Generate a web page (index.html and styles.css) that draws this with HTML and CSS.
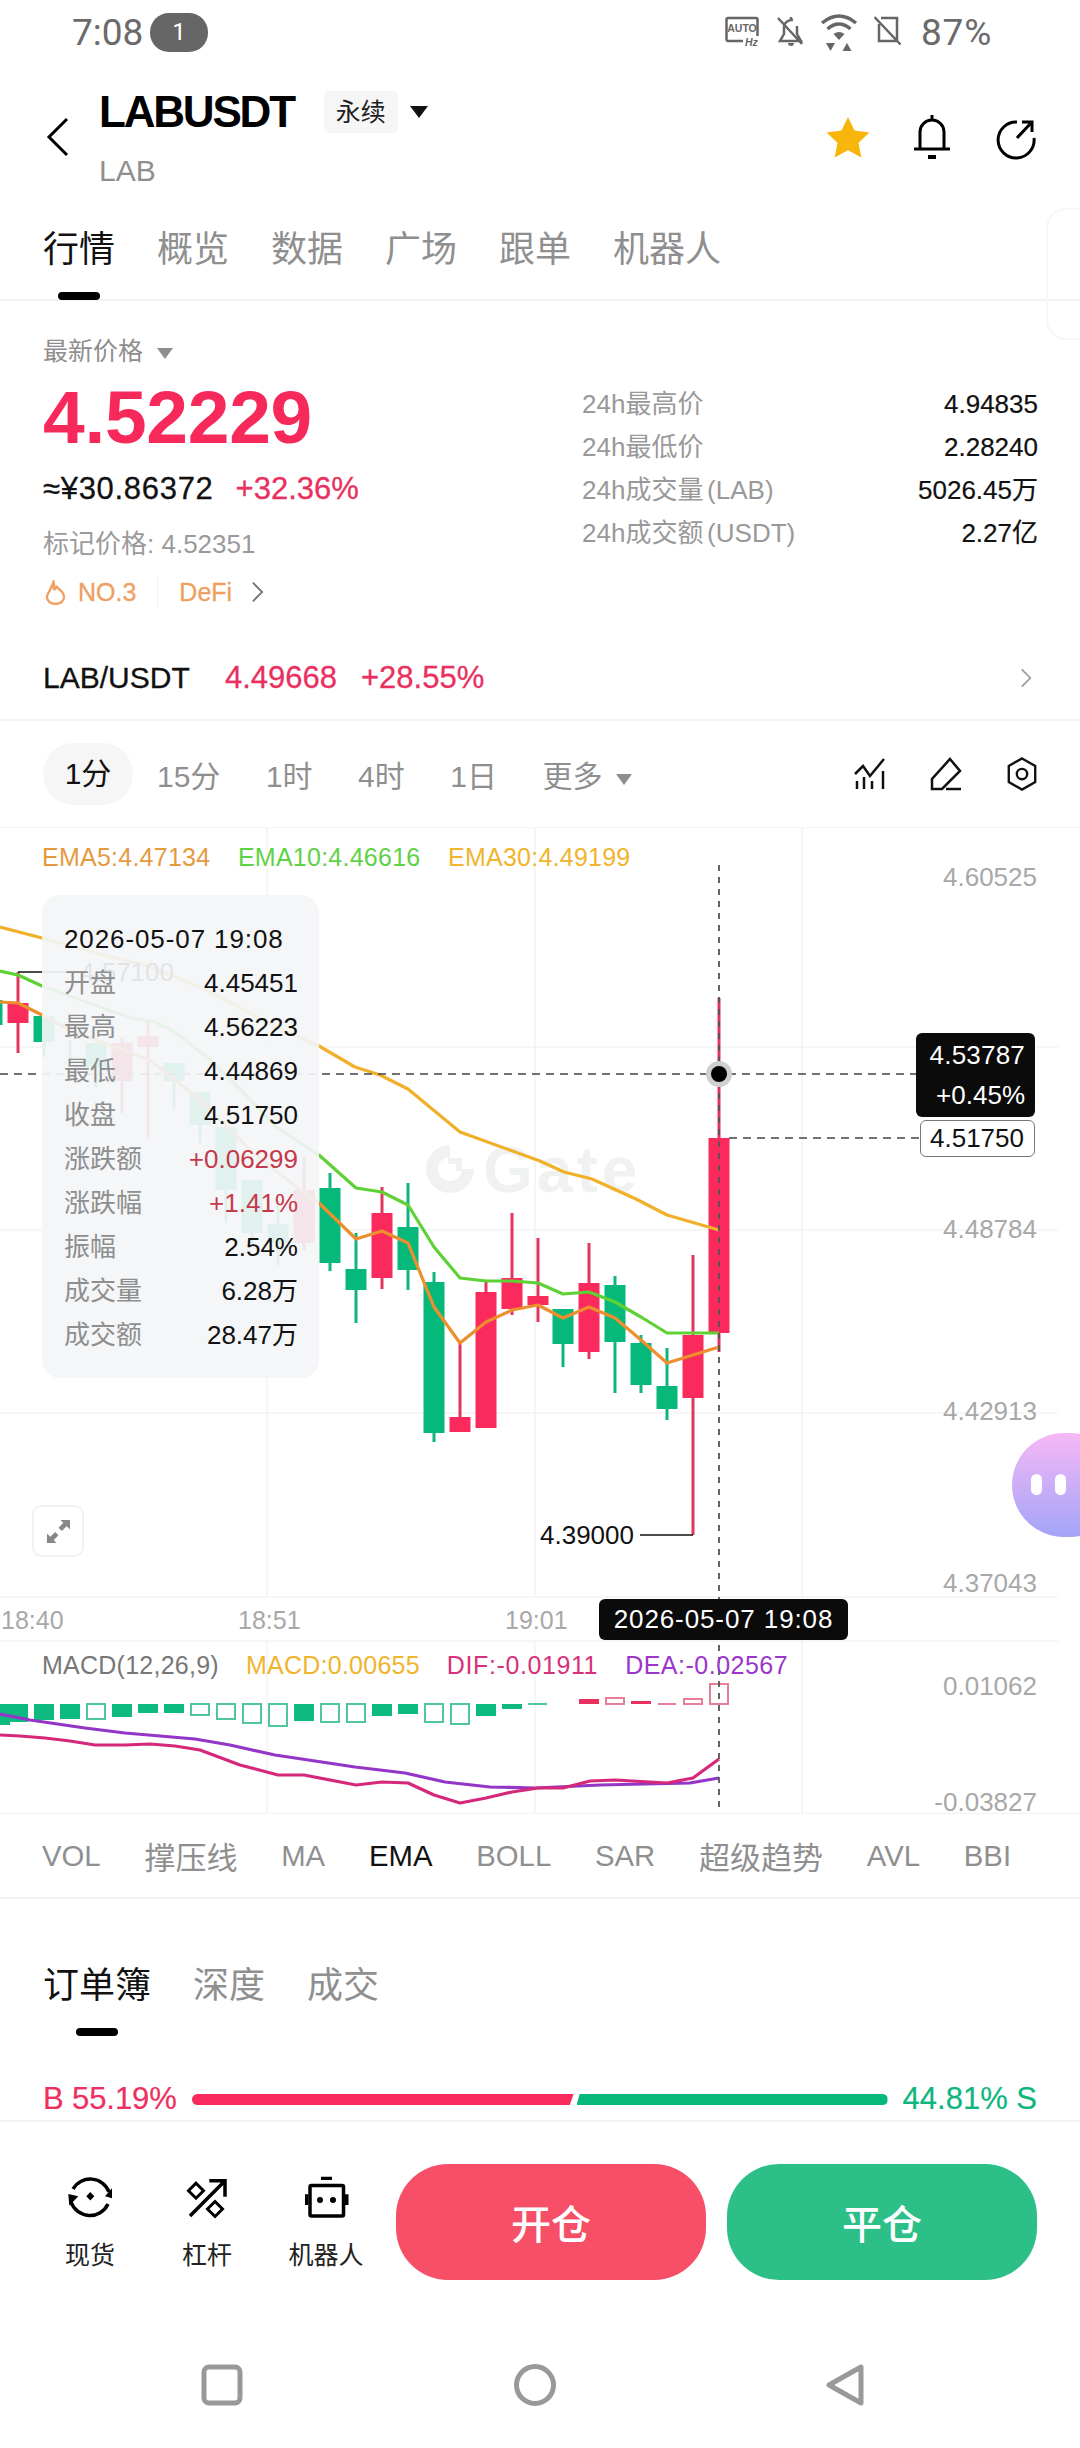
FILE: index.html
```html
<!DOCTYPE html>
<html lang="zh">
<head>
<meta charset="utf-8">
<title>LABUSDT</title>
<link rel="stylesheet" href="styles.css">
</head>
<body>
<div class="app">
  <div class="statusbar">
    <div class="clock">7:08</div>
    <div class="notif">1</div>
    <div class="status-icons">
      <svg class="si si-auto" viewBox="0 0 36 32"><path d="M18 25H3a1.500 1.500 0 0 1-1.500-1.500V3.500A1.500 1.500 0 0 1 3 2h28a1.500 1.500 0 0 1 1.500 1.500V20" class="si-line"/><text x="17" y="16" class="si-auto-t">AUTO</text><text x="20" y="30" class="si-hz">Hz</text></svg>
      <svg class="si si-bell" viewBox="0 0 28 32"><path d="M7 10a8 8 0 0 1 9-6M20 10v8l4 7H9M7 10v8l-4 7h7M14 1v3M1 2l24 26" class="si-line"/><path d="M11 27h6a3 3 0 0 1-6 0z" class="si-fill"/></svg>
      <svg class="si si-wifi" viewBox="0 0 38 38"><path d="M2 10Q19-4 36 10M7.500 16Q19 6 30.500 16" class="si-wave"/><path d="M13.500 21Q19 17 24.500 21L19 27z" class="si-fill"/><path d="M6 30h9l-4.500 8zM22.500 38h9L27 30z" class="si-fill"/></svg>
      <svg class="si si-sim" viewBox="0 0 28 32"><path d="M7 2h16v23H5V8M0.500 1L26.500 28.500" class="si-line"/></svg>
    </div>
    <div class="battery">87%</div>
  </div>

  <header class="titlebar">
    <svg class="back" viewBox="0 0 24 40"><path d="M21 2L3 20l18 18" class="icon-black-3"/></svg>
    <div class="title-text">
      <div class="title-main"><span class="symbol">LABUSDT</span><span class="perp">永续</span><span class="caret caret-black"></span></div>
      <div class="title-sub">LAB</div>
    </div>
    <svg class="star" viewBox="0 0 48 44"><path d="M24 2l6.500 13.500 15 2-11 10.300 2.800 14.700L24 35.300 10.700 42.500l2.800-14.700-11-10.300 15-2z"/></svg>
    <svg class="bell" viewBox="0 0 40 46"><path d="M8 34V18a12 12 0 0 1 24 0v16M2 35h36M20 1v4" class="icon-black-3"/><path d="M16 41h8v4h-8z" class="fill-black"/></svg>
    <svg class="share" viewBox="0 0 42 42"><path d="M22 4A18 18 0 1 0 39 20" class="icon-black-3"/><path d="M22 20L36 5M27 4h10v10" class="icon-black-3"/></svg>
  </header>

  <nav class="tabs">
    <span class="tab tab-on">行情</span><span class="tab">概览</span><span class="tab">数据</span><span class="tab">广场</span><span class="tab">跟单</span><span class="tab">机器人</span>
    <span class="side-panel"></span>
  </nav>

  <section class="stats">
    <div class="stats-left">
      <div class="price-label">最新价格<span class="caret caret-gray"></span></div>
      <div class="price">4.52229</div>
      <div class="price-sub"><span class="cny">≈¥30.86372</span><span class="up">+32.36%</span></div>
      <div class="mark">标记价格: 4.52351</div>
      <div class="tags">
        <svg class="flame" viewBox="0 0 22 26"><path d="M9 2c1 4 0 5 0 7 1 1 2 1 3-2 4 3 8 7 8 11a9 7 0 0 1-18 0c0-3 2-5 3-7 1-3 3-6 4-9z"/></svg>
        <span class="tag">NO.3</span><span class="tag-sep"></span><span class="tag">DeFi</span>
        <svg class="tag-arrow" viewBox="0 0 14 24"><path d="M2 2l10 10L2 22"/></svg>
      </div>
    </div>
    <dl class="stats-right">
      <div class="stat"><dt>24h最高价</dt><dd>4.94835</dd></div>
      <div class="stat"><dt>24h最低价</dt><dd>2.28240</dd></div>
      <div class="stat"><dt>24h成交量 (LAB)</dt><dd>5026.45万</dd></div>
      <div class="stat"><dt>24h成交额 (USDT)</dt><dd>2.27亿</dd></div>
    </dl>
  </section>

  <section class="pair">
    <span class="pair-name">LAB/USDT</span><span class="pair-num">4.49668</span><span class="pair-pct">+28.55%</span>
    <svg class="pair-arrow" viewBox="0 0 14 24"><path d="M2 2l10 10L2 22"/></svg>
  </section>

  <section class="intervals">
    <span class="iv iv-on">1分</span><span class="iv">15分</span><span class="iv">1时</span><span class="iv">4时</span><span class="iv">1日</span><span class="iv iv-more">更多<span class="caret caret-gray"></span></span>
    <div class="tools">
      <svg class="tool" viewBox="0 0 34 34"><path d="M2 17l8-8 7 10L31 2" class="icon-black-25"/><path d="M4 24v8M11 20v12M19 24v8M30 14v18" class="icon-black-25"/></svg>
      <svg class="tool" viewBox="0 0 34 34"><path d="M21 2l10 12-18 18H3V22zM17 32h15" class="icon-black-25"/></svg>
      <svg class="tool" viewBox="0 0 34 36"><path d="M17 1.500l14 8v17l-14 8-14-8v-17z" class="icon-black-25"/><circle cx="17" cy="18" r="5.500" class="icon-black-25"/></svg>
    </div>
  </section>

  <section class="chart">
    <svg class="chart-svg" viewBox="0 827 1080 987">
      <path class="grid" d="M0 827H1080M0 1047H1058M0 1230H1058M0 1413H1058M0 1597H1058M0 1641H1058M0 1813.500H1080M267 827V1597M535 827V1597M802 827V1597M267 1641V1813M535 1641V1813M802 1641V1813"/>
      <g class="wm">
        <path class="wm-ring" d="M450 1151A18 18 0 1 0 468 1169"/>
        <path class="wm-notch" d="M448 1158h14v13h-6v-7h-8z"/>
        <text x="483" y="1192" class="wm-text">Gate</text>
      </g>
      <path class="wick-red" d="M18 972V1053M122 1037V1113M148 1023V1137M304 1157V1250M382 1187V1289M460 1343V1432M486 1282V1428M512 1213V1315M538 1238V1322M589 1243V1359M693 1255V1535M719 998V1352"/>
      <path class="body-red" d="M18 1003V1023M122 1043V1081M148 1036V1047M304 1190V1243M382 1213V1278M460 1417V1432M486 1292V1428M512 1278V1309M538 1296V1305M589 1283V1352M693 1335V1398M719 1138V1333"/>
      <path class="wick-green" d="M44 1016V1057M70 1040V1060M96 1043V1087M174 1063V1108M200 1092V1143M226 1127V1223M252 1180V1245M278 1200V1265M330 1173V1271M356 1233V1323M408 1183V1290M434 1272V1442M563 1309V1367M615 1276V1393M641 1335V1393M667 1348V1420"/>
      <path class="body-green" d="M-8 1000V1025M44 1016V1042M96 1043V1067M174 1063V1081M200 1092V1125M226 1127V1190M252 1180V1233M278 1224V1243M330 1188V1263M356 1269V1290M408 1227V1270M434 1282V1433M563 1309V1344M615 1285V1342M641 1343V1385M667 1386V1409"/>
      <path class="ema30" d="M0 927L42 938 103 955 145 965 207 990 276 1027 319 1046 355 1067 380 1075 408 1089 460 1132 540 1161 564 1172 592 1179 636 1199 667 1215 719 1230"/>
      <path class="ema10" d="M0 971L18 975 42 986 100 1007 131 1018 155 1022 172 1030 207 1057 241 1090 276 1127 319 1155 356 1188 382 1192 408 1205 434 1247 460 1278 486 1281 512 1281 538 1283 563 1294 589 1292 615 1302 641 1317 667 1333 693 1333 719 1333"/>
      <path class="ema5" d="M0 1002L18 1003 42 1015 70 1030 96 1040 150 1060 200 1100 250 1150 300 1190 319 1203 356 1239 382 1231 408 1243 434 1307 460 1343 486 1322 512 1310 538 1305 563 1318 589 1307 615 1318 641 1340 667 1363 693 1355 719 1347"/>
      <path class="hi-lead" d="M18 972H80"/>
      <path class="low-lead" d="M640 1535H693"/>

      <path class="macd-solid-green" d="M0 1704V1725M18 1704V1722M44 1704V1720M70 1704V1719M122 1704V1717M148 1704V1713M174 1704V1713M304 1704V1721M382 1704V1716M408 1704V1714M486 1704V1716M512 1704V1709"/>
      <path class="macd-hollow-green" d="M87 1704H105V1719H87ZM191 1704H209V1715H191ZM217 1704H235V1719H217ZM243 1704H261V1723H243ZM269 1704H287V1726H269ZM321 1704H339V1722H321ZM347 1704H365V1722H347ZM425 1704H443V1722H425ZM451 1704H469V1724H451ZM528 1704H547"/>
      <path class="macd-solid-red" d="M589 1699V1704M641 1701V1704"/>
      <path class="macd-hollow-red" d="M606 1698H624V1704H606ZM658 1704H676M684 1699H702V1704H684ZM710 1684H728V1704H710Z"/>
      <path class="dea" d="M0 1714L30 1720 85 1728 125 1733 195 1739 230 1745 275 1755 355 1767 405 1773 445 1782 490 1787 535 1788 600 1785 690 1783 719 1778"/>
      <path class="dif" d="M0 1735L20 1736 45 1738 70 1741 95 1745 125 1745 150 1744 175 1746 200 1750 240 1765 278 1775 304 1775 356 1785 382 1782 408 1783 434 1795 460 1803 486 1798 512 1792 538 1788 563 1788 590 1781 615 1780 667 1783 693 1778 719 1759"/>

      <path class="cross" d="M0 1074H916"/>
      <path class="cross" d="M729 1138H920"/>
      <path class="cross-v" d="M719 865V1813"/>
      <circle class="dot-ring" cx="719" cy="1074" r="13"/>
      <circle class="dot" cx="719" cy="1074" r="8"/>
    </svg>

    <div class="legend legend-top"><span class="c-ema5">EMA5:4.47134</span><span class="c-ema10">EMA10:4.46616</span><span class="c-ema30">EMA30:4.49199</span></div>
    <div class="legend legend-macd"><span class="c-macd-t">MACD(12,26,9)</span><span class="c-ema30">MACD:0.00655</span><span class="c-dif">DIF:-0.01911</span><span class="c-dea">DEA:-0.02567</span></div>

    <span class="hi-price">4.57100</span>
    <div class="tip">
      <div class="tip-date">2026-05-07 19:08</div>
      <div class="tip-row"><span>开盘</span><b>4.45451</b></div>
      <div class="tip-row"><span>最高</span><b>4.56223</b></div>
      <div class="tip-row"><span>最低</span><b>4.44869</b></div>
      <div class="tip-row"><span>收盘</span><b>4.51750</b></div>
      <div class="tip-row"><span>涨跌额</span><b class="tip-up">+0.06299</b></div>
      <div class="tip-row"><span>涨跌幅</span><b class="tip-up">+1.41%</b></div>
      <div class="tip-row"><span>振幅</span><b>2.54%</b></div>
      <div class="tip-row"><span>成交量</span><b>6.28万</b></div>
      <div class="tip-row"><span>成交额</span><b>28.47万</b></div>
    </div>

    <span class="axis ax-1">4.60525</span>
    <span class="axis ax-2">4.48784</span>
    <span class="axis ax-3">4.42913</span>
    <span class="axis ax-4">4.37043</span>
    <span class="axis ax-5">0.01062</span>
    <span class="axis ax-6">-0.03827</span>

    <span class="time t-1">18:40</span>
    <span class="time t-2">18:51</span>
    <span class="time t-3">19:01</span>

    <div class="cur-label"><span class="cur-price">4.53787</span><span>+0.45%</span></div>
    <div class="close-label">4.51750</div>
    <span class="low-price">4.39000</span>
    <div class="date-label">2026-05-07 19:08</div>

    <div class="expand"><svg viewBox="0 0 26 26"><path d="M15 1h10v10l-3.500-3.500-5 5-3.500-3.500 5-5zM11 25H1V15l3.500 3.500 5-5 3.500 3.500-5 5z"/></svg></div>
    <div class="bot"><i></i><i></i></div>
  </section>

  <section class="indicators">
    <span>VOL</span><span class="ind-cjk">撑压线</span><span>MA</span><span class="ind-on">EMA</span><span>BOLL</span><span>SAR</span><span class="ind-cjk">超级趋势</span><span>AVL</span><span>BBI</span>
  </section>

  <nav class="tabs book-tabs">
    <span class="tab tab-on">订单簿</span><span class="tab">深度</span><span class="tab">成交</span>
  </nav>

  <section class="ratio">
    <span class="r-buy">B 55.19%</span>
    <div class="r-bar"><i class="r-red"></i><i class="r-green"></i></div>
    <span class="r-sell">44.81% S</span>
  </section>

  <section class="actions">
    <div class="act">
      <svg viewBox="0 0 46 46"><path d="M6 15A20 20 0 0 1 42 18M41 30A20 20 0 0 1 4 28" class="icon-black-35"/><path d="M38 22.300L45 24.300 45 14.300zM1.300 20L11.300 22.300 2.300 31.700zM23.300 18L27.300 22.300 23.300 26.600 19.300 22.300z" class="fill-black"/></svg>
      <span>现货</span>
    </div>
    <div class="act">
      <svg viewBox="0 0 46 46"><path d="M6 42L41 6.700M25.300 6.700H41V22.700" class="icon-black-35"/><path d="M12 9.200l7.500 7.500-7.500 7.500-7.500-7.500zM31 27.500l7.500 7.500-7.500 7.500-7.500-7.500z" class="icon-black-3"/></svg>
      <span>杠杆</span>
    </div>
    <div class="act">
      <svg viewBox="0 0 46 46"><rect x="7" y="11.500" width="33.500" height="30.500" rx="1.500" class="icon-black-35"/><path d="M18 2.700h11V6H18zM2 20.300h3.500V31H2zM42 20.300h3.500V31H42z" class="fill-black"/><circle cx="17" cy="26" r="3" class="fill-black"/><circle cx="30" cy="26" r="3" class="fill-black"/></svg>
      <span>机器人</span>
    </div>
    <button class="btn btn-open">开仓</button>
    <button class="btn btn-close">平仓</button>
  </section>

  <footer class="navbar">
    <svg class="nav-ic" viewBox="0 0 44 44"><rect x="4" y="4" width="36" height="36" rx="5"/></svg>
    <svg class="nav-ic" viewBox="0 0 44 44"><circle cx="22" cy="22" r="18.500"/></svg>
    <svg class="nav-ic" viewBox="0 0 44 44"><path d="M35 4v36L3 22z"/></svg>
  </footer>
</div>
</body>
</html>
```

FILE: styles.css
```css
* { box-sizing: border-box; }
html, body { margin: 0; padding: 0; background: #fff; }
body { font-family: "Liberation Sans", "Noto Sans CJK SC", sans-serif; color: #111; }
.app { width: 1080px; height: 2448px; overflow: hidden; position: relative; background: #fff; }

.statusbar { height: 64px; display: flex; align-items: center; padding: 0 0 0 72px; font-family: Roboto, sans-serif; color: #6b6b6b; }
.clock { font-size: 37px; width: 78px; }
.notif { width: 58px; height: 39px; border-radius: 19px; background: #666; color: #fff; font-size: 24px; text-align: center; line-height: 39px; }
.status-icons { margin-left: 517px; display: flex; align-items: center; width: 176px; height: 40px; gap: 15.500px; }
.si { display: block; flex: none; }
.si-auto { width: 36px; height: 32px; }
.si-bell { width: 28px; height: 32px; }
.si-wifi { width: 38px; height: 38px; }
.si-sim { width: 28px; height: 32px; }
.si-line { fill: none; stroke: #666; stroke-width: 2.500; }
.si-wave { fill: none; stroke: #666; stroke-width: 3.500; }
.si-fill { fill: #666; }
.si-auto-t { font-family: "Liberation Sans", sans-serif; font-size: 10.500px; font-weight: 700; fill: #666; text-anchor: middle; }
.si-hz { font-family: "Liberation Sans", sans-serif; font-size: 10.500px; font-weight: 700; font-style: italic; fill: #666; }
.battery { font-size: 37px; margin-left: 20px; letter-spacing: .8px; }

.titlebar { height: 126px; display: flex; align-items: flex-start; position: relative; padding-left: 46px; }
.back { width: 24px; height: 40px; margin-top: 53px; flex: none; }
.title-text { margin-left: 29px; }
.title-main { display: flex; align-items: center; height: 46px; margin-top: 25px; }
.symbol { font-size: 44px; font-weight: 700; color: #000; letter-spacing: -2.200px; }
.perp { margin-left: 30px; width: 74px; height: 42px; background: #f6f6f6; border-radius: 5px; font-size: 25px; line-height: 42px; text-align: center; color: #222; }
.title-sub { font-size: 30px; color: #8f8f8f; margin-top: 18px; line-height: 36px; }
.caret { display: inline-block; width: 0; height: 0; border-style: solid; border-color: transparent; border-width: 12px 9px 0; }
.caret-black { border-top-color: #111; margin-left: 12px; }
.caret-gray { border-top-color: #8e8e8e; border-width: 11px 8px 0; margin-left: 14px; vertical-align: middle; }
.star { position: absolute; left: 824px; top: 51px; width: 48px; height: 44px; fill: #f8b60c; }
.bell { position: absolute; left: 912px; top: 50px; width: 40px; height: 46px; }
.share { position: absolute; left: 995px; top: 54px; width: 42px; height: 42px; }
.icon-black-3 { fill: none; stroke: #000; stroke-width: 3px; }
.icon-black-25 { fill: none; stroke: #111; stroke-width: 2.500px; }
.icon-black-35 { fill: none; stroke: #000; stroke-width: 3.500px; }
.fill-black { fill: #000; }

.tabs { height: 111px; border-bottom: 2px solid #f3f3f3; padding: 42px 0 0 43px; display: flex; gap: 42px; position: relative; }
.tab { font-size: 36px; line-height: 36px; height: 36px; color: #8f8f8f; position: relative; white-space: nowrap; }
.tab-on { color: #111; }
.tab-on::after { content: ""; position: absolute; left: 50%; margin-left: -21px; top: 60px; width: 42px; height: 8px; border-radius: 4px; background: #000; }
.side-panel { position: absolute; left: 1046px; top: 18px; width: 60px; height: 132px; border: 2px solid #f7f7f7; border-radius: 20px; }

.stats { height: 335px; display: flex; justify-content: space-between; padding: 0 42px 0 43px; }
.stats-left { width: 500px; }
.price-label { font-size: 25px; line-height: 30px; color: #8e8e8e; margin-top: 35px; }
.price { font-size: 75px; font-weight: 700; line-height: 80px; height: 80px; color: #f7295b; margin-top: 11px; letter-spacing: -.3px; }
.price-sub { display: flex; gap: 22px; font-size: 31px; line-height: 36px; margin-top: 14px; -webkit-text-stroke: .3px; }
.cny { letter-spacing: .7px; color: #111; }
.up { color: #e9305f; }
.mark { font-size: 26px; line-height: 30px; color: #9a9a9a; margin-top: 22px; }
.tags { display: flex; align-items: center; margin-top: 18px; height: 30px; }
.flame { width: 21px; height: 25px; fill: none; stroke: #f0a264; stroke-width: 2.500; margin-left: 2px; }
.tag { font-size: 25px; color: #ef9f60; margin-left: 12px; -webkit-text-stroke: .3px; }
.tag-sep { width: 1px; height: 30px; background: #f2f2f2; margin: 0 9px 0 21px; }
.tag-arrow { width: 13px; height: 24px; margin-left: 19px; fill: none; stroke: #777; stroke-width: 2; }
.stats-right { margin: 85px 0 0; width: 456px; }
.stat { display: flex; justify-content: space-between; height: 43px; line-height: 36px; font-size: 26px; }
.stat dt { color: #999; word-spacing: -3.500px; }
.stat dd { margin: 0; color: #111; -webkit-text-stroke: .2px; }

.pair { height: 85px; border-bottom: 2px solid #f3f3f3; display: flex; align-items: center; padding: 0 43px; font-size: 31px; position: relative; -webkit-text-stroke: .3px; }
.pair-name { font-size: 30px; color: #111; width: 182px; }
.pair-num { color: #e9305f; width: 136px; }
.pair-pct { color: #e9305f; }
.pair-arrow { width: 12px; height: 22px; position: absolute; left: 1020px; top: 31px; fill: none; stroke: #999; stroke-width: 2; }

.intervals { height: 106px; display: flex; align-items: center; padding-left: 43px; font-size: 30px; color: #8f8f8f; position: relative; }
.iv { margin-right: 45.500px; white-space: nowrap; }
.iv-on { width: 90px; height: 62px; line-height: 62px; text-align: center; background: #f6f6f6; border-radius: 31px; color: #111; margin-right: 24px; }
.tools { position: absolute; left: 853px; top: 36px; display: flex; gap: 42px; }
.tool { width: 34px; height: 34px; display: block; }

.chart { position: relative; height: 987px; }
.chart-svg { position: absolute; left: 0; top: 0; width: 1080px; height: 987px; display: block; }
.grid { fill: none; stroke: #f3f3f3; stroke-width: 1.500; }
.wm-ring { fill: none; stroke: #f0f2f2; stroke-width: 12; }
.wm-notch { fill: #f0f2f2; }
.wm-text { font-family: "Liberation Sans", sans-serif; font-size: 64px; font-weight: 700; fill: #f0f2f2; letter-spacing: 4px; }
.wick-red { fill: none; stroke: #e0365f; stroke-width: 3; }
.body-red { fill: none; stroke: #fb2a5c; stroke-width: 21; }
.wick-green { fill: none; stroke: #10b57d; stroke-width: 3; }
.body-green { fill: none; stroke: #06b97b; stroke-width: 21; }
.ema30, .ema10, .ema5, .dea, .dif { fill: none; stroke-width: 3.200; stroke-linejoin: round; }
.ema30 { stroke: #f0b02a; }
.ema10 { stroke: #5ed135; }
.ema5 { stroke: #ee8f2e; }
.hi-lead, .low-lead { fill: none; stroke: #111; stroke-width: 1.500; }
.macd-solid-green { fill: none; stroke: #0dbb80; stroke-width: 20; }
.macd-hollow-green { fill: #fff; stroke: #4fc6a0; stroke-width: 2; }
.macd-solid-red { fill: none; stroke: #e9305f; stroke-width: 20; }
.macd-hollow-red { fill: #fff; stroke: #e77d97; stroke-width: 2; }
.dea { stroke: #9336c8; }
.dif { stroke: #d6287a; }
.cross { fill: none; stroke: #444; stroke-width: 1.500; stroke-dasharray: 8 6; }
.cross-v { fill: none; stroke: #555; stroke-width: 1.800; stroke-dasharray: 6 6; }
.dot-ring { fill: #cfcfcf; }
.dot { fill: #000; }

.legend { position: absolute; left: 42px; display: flex; gap: 27.500px; font-size: 25px; line-height: 30px; white-space: nowrap; letter-spacing: .25px; }
.legend-top { top: 15px; }
.legend-macd { top: 823px; gap: 27px; }
.c-ema5 { color: #e59a3f; }
.c-ema10 { color: #5fd246; }
.c-ema30 { color: #efb52d; }
.c-macd-t { color: #777; }
.c-dif { color: #d8307a; letter-spacing: .6px; }
.c-dea { color: #9c35c9; letter-spacing: .5px; }

.hi-price { position: absolute; left: 80px; top: 130px; font-size: 26px; line-height: 30px; color: #111; }
.tip { position: absolute; left: 42px; top: 68px; width: 277px; height: 483px; background: rgba(243, 245, 247, .92); border-radius: 18px; padding: 29px 21px 0 22px; }
.tip-date { font-size: 26px; line-height: 30px; letter-spacing: .9px; color: #111; white-space: nowrap; }
.tip-row { display: flex; justify-content: space-between; height: 44px; line-height: 30px; font-size: 26px; padding-top: 0; }
.tip-date + .tip-row { margin-top: 14px; }
.tip-row span { color: #8e8e8e; }
.tip-row b { font-weight: 400; color: #111; }
.tip-row .tip-up { color: #c5394a; }

.axis { position: absolute; right: 43px; font-size: 26px; line-height: 30px; color: #a8a8a8; }
.ax-1 { top: 35px; }
.ax-2 { top: 387px; }
.ax-3 { top: 569px; }
.ax-4 { top: 741px; }
.ax-5 { top: 844px; }
.ax-6 { top: 960px; }
.time { position: absolute; top: 778px; font-size: 25px; line-height: 30px; color: #a8a8a8; }
.t-1 { left: 1px; }
.t-2 { left: 238px; }
.t-3 { left: 505px; }

.cur-label { position: absolute; left: 916px; top: 206px; width: 119px; height: 84px; background: #0b0b0b; border-radius: 6px; color: #fff; font-size: 26px; display: flex; flex-direction: column; align-items: flex-end; justify-content: center; padding-right: 10px; line-height: 40px; }
.cur-price { letter-spacing: .2px; }
.close-label { position: absolute; left: 920px; top: 293px; width: 115px; height: 37px; background: #fff; border: 1.500px solid #777; border-radius: 6px; font-size: 26px; line-height: 34px; text-align: right; padding-right: 10px; color: #111; }
.low-price { position: absolute; left: 540px; top: 693px; font-size: 26px; line-height: 30px; color: #111; }
.date-label { position: absolute; left: 599px; top: 772px; width: 249px; height: 41px; background: #0b0b0b; border-radius: 6px; color: #fff; font-size: 26px; line-height: 41px; text-align: center; letter-spacing: .9px; white-space: nowrap; }
.expand { position: absolute; left: 32px; top: 678px; width: 52px; height: 52px; border: 2px solid #f2f2f2; border-radius: 9px; background: #fff; padding: 12px; }
.expand svg { display: block; width: 25px; height: 25px; fill: #888; }
.bot { position: absolute; left: 1012px; top: 606px; width: 110px; height: 104px; border-radius: 52px; background: linear-gradient(180deg, #f6b8f6, #a3a4f8); display: flex; gap: 13px; padding: 41px 0 0 19px; }
.bot i { display: block; width: 11px; height: 21px; border-radius: 6px; background: #fff; }

.indicators { height: 85px; border-bottom: 2px solid #f3f3f3; display: flex; align-items: center; gap: 43.800px; padding-left: 42px; font-size: 29.300px; color: #8f8f8f; white-space: nowrap; }
.ind-cjk { font-size: 31px; }
.ind-on { color: #111; }

.book-tabs { border-bottom: 0; height: 161px; padding-top: 69px; }

.ratio { height: 62px; border-bottom: 2px solid #f3f3f3; display: flex; align-items: flex-start; padding: 21px 43px 0; font-size: 31px; -webkit-text-stroke: .2px; }
.r-buy { color: #ee2f5f; line-height: 36px; width: 149px; letter-spacing: -.1px; }
.r-sell { color: #0fb57e; line-height: 36px; margin-left: 15px; white-space: nowrap; }
.r-bar { width: 696px; height: 11px; margin-top: 13px; display: flex; gap: 3px; }
.r-red { display: block; width: 382px; height: 11px; background: #fb2a5c; border-radius: 6px 0 0 6px; clip-path: polygon(0 0, 100% 0, 99% 100%, 0 100%); }
.r-green { display: block; width: 311px; height: 11px; background: #06b97b; border-radius: 0 6px 6px 0; clip-path: polygon(1% 0, 100% 0, 100% 100%, 0 100%); }

.actions { height: 198px; padding: 42px 43px 0 0; display: flex; position: relative; }
.act { position: absolute; top: 10px; display: flex; flex-direction: column; align-items: center; width: 100px; font-size: 25px; line-height: 30px; color: #222; }
.act svg { width: 46px; height: 46px; display: block; margin: 42px 0 20px; }
.act:nth-child(1) { left: 40px; }
.act:nth-child(2) { left: 157px; }
.act:nth-child(3) { left: 276px; }
.btn { position: absolute; top: 42px; height: 116px; width: 310px; border: 0; border-radius: 52px; color: #fff; font-size: 40px; font-family: "Liberation Sans", "Noto Sans CJK SC", sans-serif; font-weight: 500; }
.btn-open { left: 396px; background: #f64f67; }
.btn-close { left: 727px; background: #2cc088; }

.navbar { display: flex; padding: 43px 0 0 200px; gap: 269px; }
.nav-ic { width: 44px; height: 44px; display: block; flex: none; fill: none; stroke: #999; stroke-width: 5; stroke-linejoin: round; }
```
